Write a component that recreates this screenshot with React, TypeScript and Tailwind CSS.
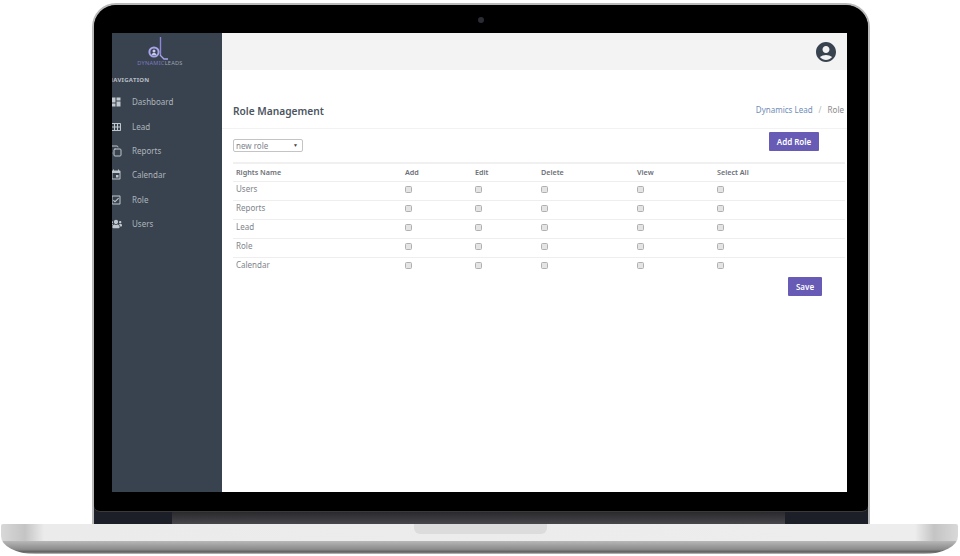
import { Copy } from "lucide-react";
import { FaUsers } from "react-icons/fa";
import {
  MdDashboard,
  MdEvent,
  MdOutlineCheckBox,
  MdAccountCircle,
  MdCalendarViewMonth,
} from "react-icons/md";

const navItems = [
  { label: "Dashboard", icon: MdDashboard },
  { label: "Lead", icon: MdCalendarViewMonth },
  { label: "Reports", icon: Copy },
  { label: "Calendar", icon: MdEvent },
  { label: "Role", icon: MdOutlineCheckBox },
  { label: "Users", icon: FaUsers },
];

const rows = ["Users", "Reports", "Lead", "Role", "Calendar"];
const columns = ["Add", "Edit", "Delete", "View", "Select All"];
const colWidths = ["w-[70px]", "w-[66px]", "w-[96px]", "w-[80px]", "w-[131px]"];

function Logo() {
  return (
    <div className="-ml-[14px] flex flex-col items-center pt-[4px]">
      <svg width="22" height="23" viewBox="0 0 22 23" fill="none" className="-ml-[3px]">
        <path d="M12.5 0V18" stroke="#8f86d8" strokeWidth="1.4" />
        <circle cx="6" cy="15" r="4.6" stroke="#a9a4ea" strokeWidth="2" />
        <circle cx="6" cy="14" r="1.5" fill="#c9c6f2" />
        <path d="M3.5 18c.4-2.6 4.6-2.6 5 0" fill="#c9c6f2" />
        <path d="M12 18l4 4h4" stroke="#a9a4ea" strokeWidth="1.3" />
      </svg>
      <div className="-mt-[1px] text-[5.6px] leading-[8px] tracking-[0.25px] text-[#7f7ac0]">
        DYNAMIC<span className="text-[#9fa3b5]">LEADS</span>
      </div>
    </div>
  );
}

function Sidebar() {
  return (
    <aside className="flex w-[110px] shrink-0 flex-col overflow-hidden bg-[#38434f]">
      <Logo />
      <div className="mt-[8px] -ml-[4px] text-[6px] font-bold leading-[10px] tracking-[0.3px] text-[#b8bec6]">
        NAVIGATION
      </div>
      <nav className="mt-[5px] flex flex-col">
        {navItems.map((item) => (
          <div key={item.label} className="flex h-[24.4px] items-center">
            <item.icon className="-ml-[2px] h-[12px] w-[12px] shrink-0 text-[#c2c7cd]" />
            <span className="ml-[10px] text-[8px] text-[#aeb4bc]">{item.label}</span>
          </div>
        ))}
      </nav>
    </aside>
  );
}

function RoleTable() {
  return (
    <table className="mt-[10px] w-[612px] table-fixed border-t-2 border-[#f0f0f0] text-left">
      <thead>
        <tr className="h-[18px] border-b-[1.5px] border-[#eeeeee]">
          <th className="w-[169px] pl-[3px] text-[7.2px] font-semibold text-[#6b7078]">Rights Name</th>
          {columns.map((c, i) => (
            <th key={c} className={`${colWidths[i]} pl-[3px] text-[7.2px] font-semibold text-[#6b7078]`}>
              {c}
            </th>
          ))}
        </tr>
      </thead>
      <tbody>
        {rows.map((r, ri) => (
          <tr
            key={r}
            className={ri < rows.length - 1 ? "h-[19px] border-b-[1.5px] border-[#eeeeee]" : "h-[19px]"}
          >
            <td className="pb-[4px] pl-[3px] text-[8px] text-[#80858b]">{r}</td>
            {columns.map((c) => (
              <td key={c} className="pb-[2px] pl-[3px]">
                <div className="h-[7px] w-[7px] rounded-[1.5px] border border-[#b0b0b0] bg-[#e4e4e4]" />
              </td>
            ))}
          </tr>
        ))}
      </tbody>
    </table>
  );
}

function Screen() {
  return (
    <div className="flex h-[459px] w-[735px] bg-white font-['Noto_Sans',sans-serif]">
      <Sidebar />
      <main className="flex min-w-0 flex-1 flex-col">
        <header className="flex h-[37px] items-center justify-end bg-[#f3f3f3] pr-[9px]">
          <MdAccountCircle className="h-[24px] w-[24px] text-[#38434f]" />
        </header>
        <div className="flex h-[59px] items-end justify-between border-b-[1.5px] border-[#f2f2f2] pb-[9px] pl-[11px] pr-[3px]">
          <h1 className="text-[10.2px] font-semibold leading-[16px] text-[#4c5560]">Role Management</h1>
          <div className="mb-[3px] flex gap-[6px] text-[8px] leading-[12px]">
            <span className="text-[#6f8db8]">Dynamics Lead</span>
            <span className="text-[#b5b5b5]">/</span>
            <span className="text-[#8a8a8a]">Role</span>
          </div>
        </div>
        <div className="flex flex-col pl-[11px]">
          <div className="flex items-start justify-between pr-[28px] pt-[2px]">
            <div className="mt-[8px] flex h-[13px] w-[70px] items-center justify-between rounded-[2px] border border-[#c4c4c4] pl-[2px] pr-[4px] text-[8px] text-[#80858b]">
              <span>new role</span>
              <span className="text-[5px] text-[#444]">▼</span>
            </div>
            <button className="mt-[1px] h-[19px] w-[50px] rounded-[1px] bg-[#675bb5] text-[8px] font-semibold text-white">
              Add Role
            </button>
          </div>
          <RoleTable />
          <div className="flex justify-end pr-[25px] pt-[1px]">
            <button className="h-[19px] w-[34px] rounded-[1px] bg-[#675bb5] text-[8px] font-semibold text-white">
              Save
            </button>
          </div>
        </div>
      </main>
    </div>
  );
}

function Lid() {
  return (
    <div className="ml-[92px] mt-[3px] h-[521px] w-[778px] rounded-t-[24px] border-x-2 border-t-2 border-[#b9b9b9] bg-[#1c1f28]">
      <div className="h-[507px] rounded-t-[22px] rounded-b-[6px] border-b border-[#3a3a3a] bg-black">
        <div className="flex h-[28px] items-center justify-center pt-[2px]">
          <div className="h-[6px] w-[6px] rounded-full bg-[#2b2b33]" />
        </div>
        <div className="pl-[18px]">
          <Screen />
        </div>
      </div>
      <div className="flex h-[12px]">
        <div className="w-[78px]" />
        <div className="flex-1 bg-[linear-gradient(#2a2a2d,#47474b)]" />
        <div className="w-[83px]" />
      </div>
    </div>
  );
}

function Base() {
  return (
    <div className="ml-[1px] flex h-[30px] w-[957px] flex-col overflow-hidden rounded-b-[34px_18px] rounded-t-[2px]">
      <div className="relative h-[17px] shrink-0 bg-[linear-gradient(90deg,#d8d8d8,#c4c4c4_2.5%,#ebebeb_4.5%,#ededed_95.5%,#c4c4c4_97.5%,#d8d8d8)]">
        <div className="absolute left-[413px] top-0 h-[10px] w-[133px] rounded-b-[6px] bg-[#dcdcdc]" />
      </div>
      <div className="flex-1 bg-[linear-gradient(#b8b8b8,#8a8a8a_65%,#5c5c5c_85%,#c8c8c8)]" />
    </div>
  );
}

export default function App() {
  return (
    <div className="h-[556px] w-[960px] overflow-hidden bg-white">
      <Lid />
      <Base />
    </div>
  );
}
